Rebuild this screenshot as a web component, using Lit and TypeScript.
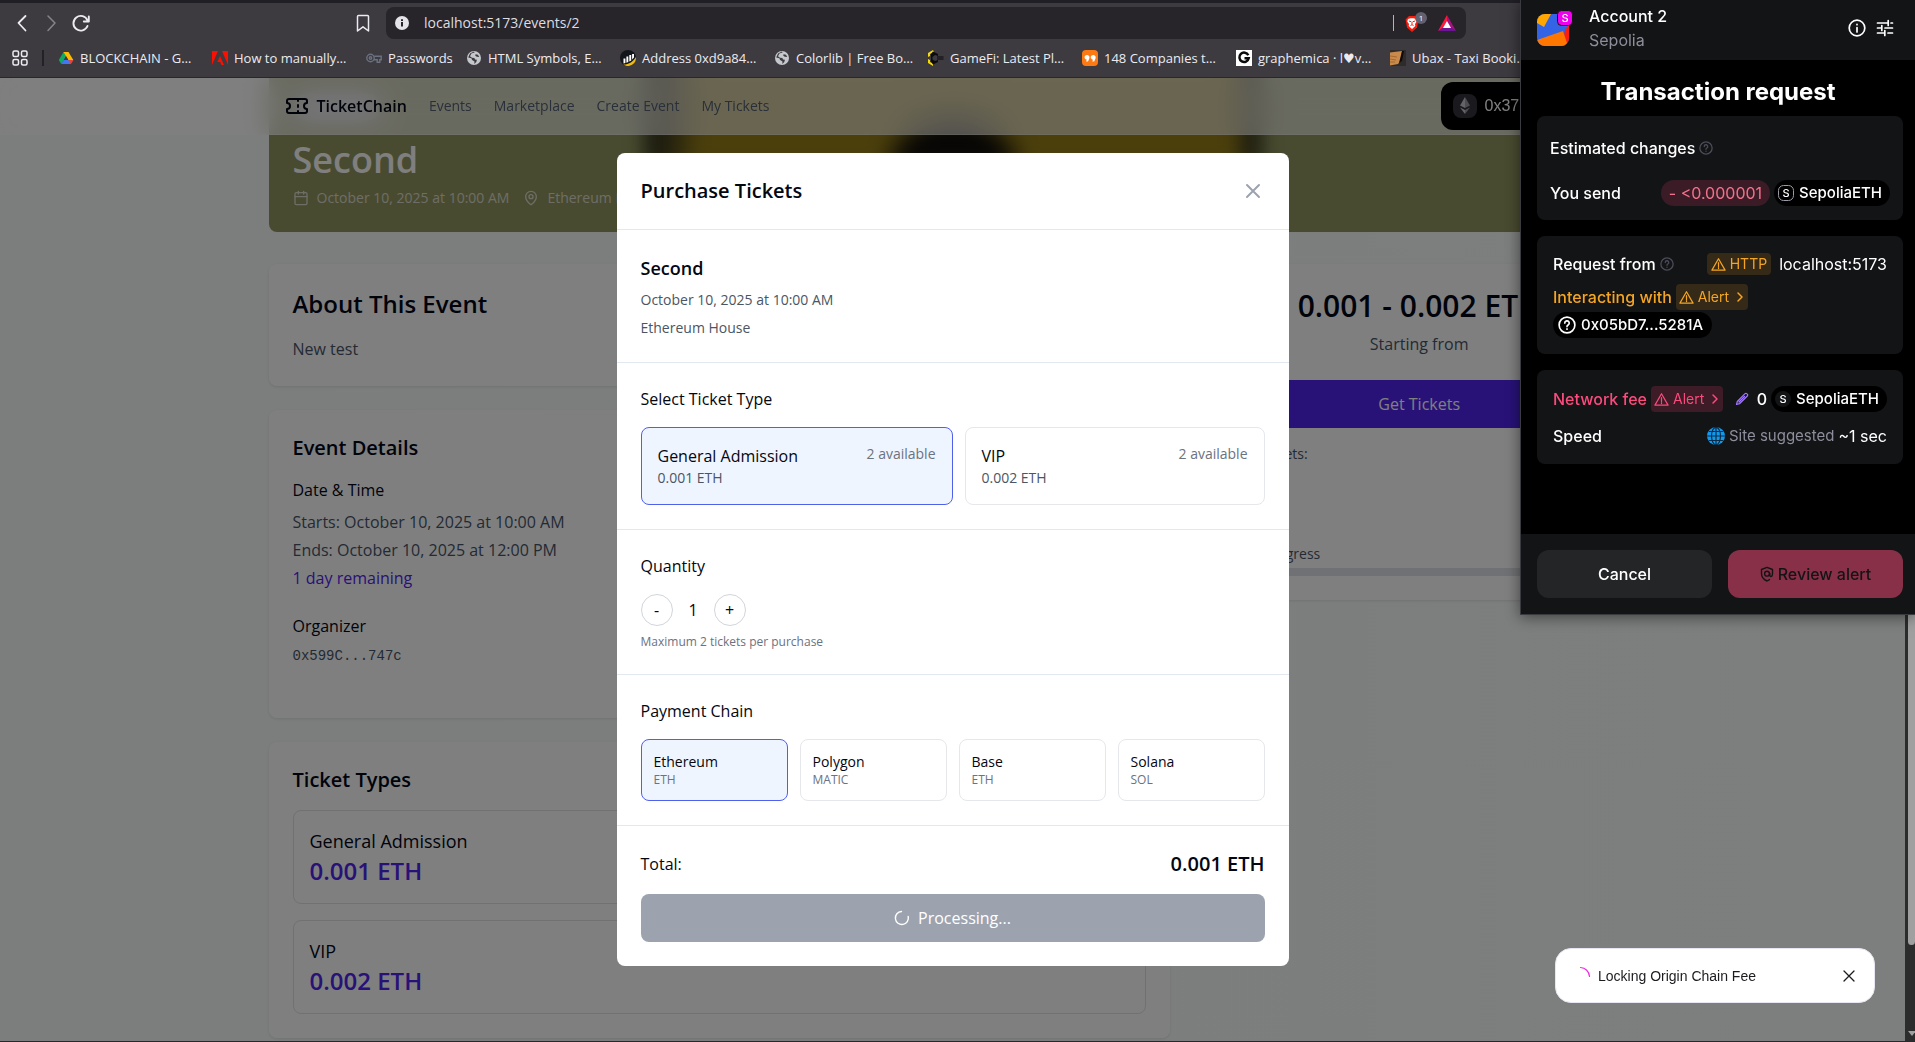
import { LitElement, html, css, svg } from "lit";
import { customElement, property, state } from "lit/decorators.js";
import { classMap } from "lit/directives/class-map.js";

const base = css`
  * {
    box-sizing: border-box;
    margin: 0;
    padding: 0;
  }
  button,
  input {
    font: inherit;
    color: inherit;
    background: none;
    border: 0;
  }
  button {
    cursor: pointer;
  }
  a {
    color: inherit;
    text-decoration: none;
  }
  svg {
    display: block;
    flex: none;
  }
  .stroke {
    fill: none;
    stroke: currentColor;
    stroke-linecap: round;
    stroke-linejoin: round;
  }
`;

/* ---------- Browser toolbar ---------- */

const globe = svg`<circle cx="8" cy="8" r="7" fill="#c4c7cc"/>
  <path d="M8.600 2.400 5.400 3.600 4 6.200l2 1.600 2.400.3.600 1.300 1.900.4-.6 2.300-2 2 .2-2.600-2.400-1.600L5.400 8.300 2.200 7.600 4 3.600 8 1.600Z" fill="#3d3a40"/>
  <path d="M9.500 4.200 12 4.800l1.200 2.200-2.400-.2-1.500-1Z" fill="#3d3a40"/>`;

const bookmarks = [
  {
    label: "BLOCKCHAIN - G…",
    icon: svg`<path d="M5.500 2h5l-4.700 8.300L3.200 14 .8 10Z" fill="#11a861"/><path d="M5.500 2h5L15.300 10h-4.900Z" fill="#ffba00"/><path d="M5.600 10h9.700l-2.500 4H3.200Z" fill="#4177f0"/><path d="M10.400 10h4.900l-2.500 4Z" fill="#ea4335"/><path d="M8 6.300 10.200 10H5.800Z" fill="#3d3a40"/>`,
  },
  {
    label: "How to manually…",
    icon: svg`<path d="M0 1h6L0 15ZM16 1h-6l6 14ZM8 6l4 9H9.300L8.200 12H5.300Z" fill="#fa0f00"/>`,
  },
  {
    label: "Passwords",
    short: true,
    icon: svg`<g fill="none" stroke="#6a7180" stroke-width="1.400"><circle cx="4.500" cy="8" r="3.700"/><circle cx="4.500" cy="8" r="1.200"/><path d="M8.200 6.300h7v3.500h-1.400v2.400h-2.600V9.800H8"/></g>`,
  },
  { label: "HTML Symbols, E…", icon: globe },
  {
    label: "Address 0xd9a84…",
    icon: svg`<circle cx="8" cy="8" r="8" fill="#12161c"/><path d="M15.900 7A8 8 0 0 1 3.500 14.600C9 14.500 13.500 11.500 15.900 7Z" fill="#f0b90b"/><path d="M3.500 8.500h1.900V13l-1.900.6ZM6.400 6.500h1.900V12l-1.900.8ZM9.300 5h1.900v5.500l-1.900 1.100ZM12.100 4H14v3.500l-1.900 2Z" fill="#fff"/>`,
  },
  { label: "Colorlib | Free Bo…", icon: globe },
  {
    label: "GameFi: Latest Pl…",
    icon: svg`<path d="M5 0 0 3v4l2-1V4l4-2ZM0 9v4l5 3V13.500L2 12v-2Z" fill="#f5d90a"/><path d="M5 1.500 10 4v2L7 5 4.500 7v2.500L7 11l3-1v2l-5 2.500-2-3V4Z" fill="#0c0c0d"/><path d="M9 6h6.500v4H9Z" fill="#232126"/>`,
  },
  {
    label: "148 Companies t…",
    icon: svg`<rect width="16" height="16" rx="4" fill="#fb7a14"/><path d="M2.500 7.500a2.500 2.500 0 1 1 4.800 1L6 11.500H4l.8-1.800a2.500 2.500 0 0 1-2.300-2.200ZM8.700 7.500a2.500 2.500 0 1 1 4.800 1l-1.300 3h-2l.8-1.800a2.500 2.500 0 0 1-2.300-2.200Z" fill="#fff"/>`,
  },
  {
    label: "graphemica · l♥v…",
    icon: svg`<rect width="16" height="16" fill="#fff"/><path d="M12.300 5.200A4.700 4.700 0 1 0 12.700 8.300H8.500" fill="none" stroke="#0b0b0b" stroke-width="2.500"/>`,
  },
  {
    label: "Ubax - Taxi Booki…",
    icon: svg`<rect width="16" height="16" fill="#2e2b2b"/><path d="M0 2.500 12 1l-1 9-3 4-8 1.500Z" fill="#c98a4b"/><path d="M0 6l7 1M0 9l6 1M0 12l5 0" stroke="#a66a30"/><path d="M12 1h2l-2 10-3 2Z" fill="#0e0b0a"/>`,
  },
];

@customElement("browser-bar")
class BrowserBar extends LitElement {
  static styles = [
    base,
    css`
      :host {
        display: block;
        flex: none;
        background: #3d3a40;
        border-top: 3px solid #211f26;
        border-bottom: 1px solid #29272d;
        color: #ececf0;
        font: 14px/20px "Open Sans", "DejaVu Sans", sans-serif;
      }
      .tools {
        display: flex;
        align-items: center;
        height: 40px;
        padding: 0 12px;
      }
      .tool {
        display: grid;
        place-items: center;
        width: 20px;
        height: 20px;
        margin-right: 9px;
      }
      .tool.off {
        color: #86838a;
      }
      .save {
        margin-left: 254px;
        margin-right: 13px;
      }
      .address {
        display: flex;
        align-items: center;
        flex: 0 1 1080px;
        height: 32px;
        padding: 0 10px 0 9px;
        gap: 10px;
        border-radius: 8px;
        background: #27242a;
      }
      .address input {
        flex: 1;
        min-width: 0;
        margin-left: 5px;
        outline: 0;
        color: #dddde2;
      }
      .split {
        width: 1px;
        height: 16px;
        background: #b5b3b8;
      }
      .marks {
        display: flex;
        align-items: center;
        gap: 16px;
        height: 34px;
        padding: 0 12px 4px;
        overflow: hidden;
      }
      .apps {
        flex: none;
      }
      .rule {
        flex: none;
        width: 2px;
        height: 16px;
        margin: 0 -2px;
        background: #232126;
      }
      .mark {
        display: flex;
        align-items: center;
        gap: 6px;
        flex: 0 0 138px;
        min-width: 0;
        font-size: 13px;
        white-space: nowrap;
      }
      .mark.short {
        flex-basis: 84px;
      }
    `,
  ];

  render() {
    return html`
      <div class="tools">
        <button class="tool" aria-label="Back">
          <svg class="stroke" width="20" height="20" viewBox="0 0 20 20" stroke-width="1.800"><path d="M13.500 3 6.500 10l7 7.500" /></svg>
        </button>
        <button class="tool off" aria-label="Forward">
          <svg class="stroke" width="20" height="20" viewBox="0 0 20 20" stroke-width="1.500"><path d="m7 3 7 7-7 7.500" /></svg>
        </button>
        <button class="tool" aria-label="Reload">
          <svg class="stroke" width="20" height="20" viewBox="0 0 20 20" stroke-width="1.900"><path d="M17.500 13A7.300 7.300 0 1 1 17.500 7.500M18.800 3.500v5h-5" /></svg>
        </button>
        <button class="tool save" aria-label="Bookmark this page">
          <svg class="stroke" width="20" height="20" viewBox="0 0 20 20" stroke-width="1.500"><path d="M4.500 3.500a1 1 0 0 1 1-1h9a1 1 0 0 1 1 1V18L10 13.800 4.500 18Z" /></svg>
        </button>
        <div class="address">
          <svg width="14" height="14" viewBox="0 0 14 14"><circle cx="7" cy="7" r="7" fill="#e4e4e8" /><path d="M6 6h2v4.500H6ZM6 3.200h2V5H6Z" fill="#27242a" /></svg>
          <input type="text" aria-label="Address" value="localhost:5173/events/2" />
          <span class="split"></span>
          <button aria-label="Shields">
            <svg width="24" height="22" viewBox="0 0 24 22">
              <path d="m3 6 2-2h6l2 2 1.500 1.500-1.500 8-5 4.500-5-4.500L1.500 7.500Z" fill="#fb1c0c" />
              <path d="m4 7 2.500-.7h3L12 7l.8 2.500L11 12l.3 2L8 17l-3.300-3 .3-2-1.800-2.500Z" fill="#fff" />
              <path d="m5 9 2 .7M11 9l-2 .7M8 9.500v3M6.500 13.500 8 12.700l1.500.8" stroke="#fb1c0c" fill="none" />
              <circle cx="17" cy="6" r="6" fill="#62606f" />
              <text x="17" y="9" font-size="8" fill="#fff" text-anchor="middle">1</text>
            </svg>
          </button>
          <button aria-label="Rewards">
            <svg width="18" height="16" viewBox="0 0 18 16"><path d="M9 0 0 16l9-5Z" fill="#ff1a3c" /><path d="m9 0 9 16-9-5Z" fill="#a3127f" /><path d="M0 16h18l-5-3.500H5Z" fill="#6b1595" /><path d="m9 6 4 7H5Z" fill="#fff" /></svg>
          </button>
        </div>
      </div>
      <nav class="marks" aria-label="Bookmarks">
        <button class="apps" aria-label="All apps">
          <svg class="stroke" width="16" height="16" viewBox="0 0 16 16" stroke-width="1.500">
            <rect x="1" y="1" width="5.500" height="5.500" rx="1.500" /><rect x="9.500" y="1" width="5.500" height="5.500" rx="1.500" />
            <rect x="1" y="9.500" width="5.500" height="5.500" rx="1.500" /><rect x="9.500" y="9.500" width="5.500" height="5.500" rx="1.500" />
          </svg>
        </button>
        <span class="rule"></span>
        ${bookmarks.map(
          (b) => html`<a class=${classMap({ mark: true, short: !!b.short })} href="#">
            <svg width="16" height="16" viewBox="0 0 16 16">${b.icon}</svg>${b.label}
          </a>`
        )}
      </nav>
    `;
  }
}

/* ---------- Event page ---------- */

@customElement("site-nav")
class SiteNav extends LitElement {
  static styles = [
    base,
    css`
      :host {
        display: block;
        align-self: start;
        background: rgba(255, 255, 255, 0.6);
        border-bottom: 1px solid rgba(255, 255, 255, 0.25);
        backdrop-filter: blur(12px);
        font: 14px/20px "Open Sans", sans-serif;
        color: #536074;
      }
      .inner {
        display: flex;
        align-items: center;
        gap: 22px;
        max-width: 1368px;
        height: 56px;
        margin: 0 auto;
        padding: 0 16px;
      }
      .brand {
        display: flex;
        align-items: center;
        gap: 8px;
        color: #020617;
        font-size: 16px;
        font-weight: 600;
      }
      .account {
        display: flex;
        align-items: center;
        gap: 8px;
        width: 180px;
        height: 48px;
        margin-left: auto;
        padding: 0 12px;
        border-radius: 12px;
        background: #000;
        color: #fff;
        font: 16px/24px "Liberation Sans", sans-serif;
      }
      .coin {
        display: grid;
        place-items: center;
        width: 24px;
        height: 24px;
        border-radius: 8px;
        background: #32333c;
      }
    `,
  ];

  render() {
    return html`<nav class="inner" aria-label="Main">
      <a class="brand" href="#">
        <svg class="stroke" width="24" height="24" viewBox="0 0 24 24" stroke-width="2">
          <path d="M2 9a3 3 0 0 1 0 6v2a2 2 0 0 0 2 2h16a2 2 0 0 0 2-2v-2a3 3 0 0 1 0-6V7a2 2 0 0 0-2-2H4a2 2 0 0 0-2 2ZM13 5v2M13 17v2M13 11v2" />
        </svg>
        TicketChain
      </a>
      <a href="#">Events</a>
      <a href="#">Marketplace</a>
      <a href="#">Create Event</a>
      <a href="#">My Tickets</a>
      <button class="account">
        <span class="coin">
          <svg width="12" height="18" viewBox="0 0 12 18"><path d="M6 0 1 8.500 6 11Z" fill="#c8c9cf" /><path d="m6 0 5 8.500L6 11Z" fill="#9a9ba3" /><path d="M1 10.500 6 17v-4Z" fill="#c8c9cf" /><path d="M11 10.500 6 17v-4Z" fill="#9a9ba3" /></svg>
        </span>
        0x37c…
      </button>
    </nav>`;
  }
}

@customElement("event-page")
class EventPage extends LitElement {
  static styles = [
    base,
    css`
      :host {
        display: block;
        min-height: 0;
        isolation: isolate;
        background: linear-gradient(90deg, #f8fcfa, #fafefc);
        color: #020617;
        font: 16px/24px "Open Sans", sans-serif;
      }
      .wrap {
        max-width: 1368px;
        margin: 0 auto;
      }
      .banner {
        display: grid;
        height: 154px;
        overflow: hidden;
        border-radius: 0 0 8px 8px;
        background: #929660;
        color: #fff;
      }
      .photo,
      .lead {
        grid-area: 1 / 1;
      }
      .photo {
        justify-self: center;
        width: 620px;
        height: 100px;
        margin-top: -12px;
        filter: blur(9px);
        background:
          radial-gradient(ellipse 78px 66px at 310px 106px, #0e0c0a 65%, #967e1800 100%),
          linear-gradient(90deg, #46472a 0, #34341f 16px, #564c1c 32px, #967e18 56px, #967e18 590px, #34341f 606px, #46472a 100%);
      }
      .lead {
        display: flex;
        flex-direction: column;
        align-items: flex-start;
        gap: 8px;
        align-self: end;
        padding: 0 24px 24px;
        z-index: 1;
      }
      .tag {
        width: 88px;
        height: 26px;
        margin-bottom: 12px;
        border-radius: 13px;
        background: #dcd4f4;
      }
      .title {
        font-size: 36px;
        line-height: 40px;
        font-weight: 600;
      }
      .meta {
        display: flex;
        align-items: center;
        gap: 8px;
        color: #dcdccc;
        font-size: 14px;
        line-height: 20px;
      }
      .meta svg + span {
        margin-right: 6px;
      }
      .columns {
        display: grid;
        grid-template-columns: repeat(3, 1fr);
        gap: 32px;
        align-items: start;
        margin-top: 32px;
      }
      .stack {
        display: grid;
        gap: 24px;
        grid-column: span 2;
      }
      .card {
        padding: 24px;
        border-radius: 8px;
        background: #fff;
        box-shadow: 0 1px 3px rgba(0, 0, 0, 0.1);
      }
      .card.roomy {
        padding-bottom: 52px;
      }
      h2 {
        margin-bottom: 16px;
        font-size: 24px;
        line-height: 32px;
        font-weight: 600;
      }
      h3 {
        margin-bottom: 16px;
        font-size: 20px;
        line-height: 28px;
        font-weight: 600;
      }
      h4 {
        margin-bottom: 8px;
        font-size: 16px;
        font-weight: 500;
      }
      .copy {
        line-height: 26px;
        color: #475569;
      }
      .when {
        display: grid;
        gap: 4px;
        margin-bottom: 24px;
        color: #475569;
      }
      .left {
        color: #5024f0;
        font-weight: 500;
      }
      .mono {
        font: 14px/20px "Liberation Mono", monospace;
        color: #475569;
      }
      .tier {
        padding: 16px;
        border: 1px solid #e2e2e4;
        border-radius: 8px;
      }
      .tier + .tier {
        margin-top: 16px;
      }
      .name {
        font-size: 18px;
        line-height: 28px;
        font-weight: 500;
      }
      .cost {
        color: #5024f0;
        font-size: 24px;
        line-height: 32px;
        font-weight: 600;
      }
      .side {
        text-align: center;
      }
      .range {
        margin-bottom: 8px;
        font-size: 30px;
        line-height: 36px;
        font-weight: 600;
        white-space: nowrap;
      }
      .from {
        color: #475569;
      }
      .get {
        width: 100%;
        height: 48px;
        margin: 24px 0 16px;
        border-radius: 8px;
        background: #5024f0;
        color: #fff;
      }
      .fact {
        text-align: left;
        font-size: 14px;
        line-height: 20px;
        color: #475569;
      }
      .fact.sales {
        margin: 80px 0 4px;
      }
      .bar {
        height: 8px;
        border-radius: 4px;
        background: #dfe3e8;
      }
    `,
  ];

  render() {
    return html`
      <div class="wrap">
        <header class="banner">
          <div class="photo"></div>
          <div class="lead">
            <span class="tag"></span>
            <h1 class="title">Second</h1>
            <p class="meta">
              <svg class="stroke" width="16" height="16" viewBox="0 0 24 24" stroke-width="2"><path d="M8 2v4M16 2v4M3 10h18" /><rect x="3" y="4" width="18" height="18" rx="2" /></svg>
              <span>October 10, 2025 at 10:00 AM</span>
              <svg class="stroke" width="16" height="16" viewBox="0 0 24 24" stroke-width="2"><path d="M20 10c0 5-5.500 10.200-7.400 11.800a1 1 0 0 1-1.200 0C9.500 20.200 4 15 4 10a8 8 0 0 1 16 0" /><circle cx="12" cy="10" r="3" /></svg>
              <span>Ethereum House</span>
            </p>
          </div>
        </header>
        <div class="columns">
          <div class="stack">
            <section class="card">
              <h2>About This Event</h2>
              <p class="copy">New test</p>
            </section>
            <section class="card roomy">
              <h3>Event Details</h3>
              <h4>Date &amp; Time</h4>
              <div class="when">
                <p>Starts: October 10, 2025 at 10:00 AM</p>
                <p>Ends: October 10, 2025 at 12:00 PM</p>
                <p class="left">1 day remaining</p>
              </div>
              <h4>Organizer</h4>
              <p class="mono">0x599C...747c</p>
            </section>
            <section class="card">
              <h3>Ticket Types</h3>
              <div class="tier">
                <p class="name">General Admission</p>
                <p class="cost">0.001 ETH</p>
              </div>
              <div class="tier">
                <p class="name">VIP</p>
                <p class="cost">0.002 ETH</p>
              </div>
            </section>
          </div>
          <section class="card side">
            <p class="range">0.001 - 0.002 ETH</p>
            <p class="from">Starting from</p>
            <button class="get">Get Tickets</button>
            <p class="fact">Total tickets:</p>
            <p class="fact sales">Sales progress</p>
            <div class="bar"></div>
          </section>
        </div>
      </div>
    `;
  }
}

/* ---------- Purchase dialog ---------- */

@customElement("purchase-dialog")
class PurchaseDialog extends LitElement {
  @state() private tier = 0;
  @state() private chain = 0;
  @state() private count = 1;

  private tiers = [
    { name: "General Admission", price: "0.001 ETH" },
    { name: "VIP", price: "0.002 ETH" },
  ];
  private chains = [
    ["Ethereum", "ETH"],
    ["Polygon", "MATIC"],
    ["Base", "ETH"],
    ["Solana", "SOL"],
  ];

  static styles = [
    base,
    css`
      :host {
        display: block;
        width: min(672px, 100%);
        border-radius: 8px;
        background: #fff;
        color: #030712;
        font: 16px/24px "Open Sans", sans-serif;
      }
      section,
      header,
      footer {
        padding: 24px;
      }
      section,
      header {
        border-bottom: 1px solid #e2e8f0;
      }
      header {
        display: flex;
        justify-content: space-between;
        align-items: center;
      }
      h2 {
        font-size: 20px;
        line-height: 28px;
        font-weight: 600;
      }
      .close {
        color: #9ca3af;
      }
      h3 {
        font-size: 18px;
        line-height: 28px;
        font-weight: 600;
      }
      h4 {
        margin-bottom: 16px;
        font-size: 16px;
        font-weight: 500;
      }
      .line,
      .price,
      .stock {
        color: #4b5563;
        font-size: 14px;
        line-height: 20px;
      }
      .line {
        margin-top: 8px;
      }
      .tiers {
        display: grid;
        grid-template-columns: 26fr 25fr;
        gap: 12px;
      }
      .chains {
        display: grid;
        grid-template-columns: repeat(4, 1fr);
        gap: 12px;
      }
      .option {
        display: flex;
        justify-content: space-between;
        align-items: flex-start;
        padding: 16px;
        border: 1px solid #e5e7eb;
        border-radius: 8px;
        text-align: left;
      }
      .option.on {
        border-color: #4f5fee;
        background: #eff5ff;
      }
      .name {
        display: block;
        font-weight: 500;
      }
      .price {
        display: block;
      }
      .stock {
        color: #6b7280;
      }
      .chains .option {
        display: block;
        padding: 12px;
      }
      .chains .name {
        font-size: 14px;
        line-height: 20px;
      }
      .unit {
        display: block;
        color: #6b7280;
        font-size: 12px;
        line-height: 16px;
      }
      .stepper {
        display: flex;
        align-items: center;
        gap: 16px;
      }
      .round {
        width: 32px;
        height: 32px;
        border: 1px solid #d1d5db;
        border-radius: 50%;
        font-weight: 500;
      }
      .count {
        font-weight: 500;
      }
      .hint {
        margin-top: 8px;
        color: #6b7280;
        font-size: 12px;
        line-height: 16px;
      }
      .total {
        display: flex;
        justify-content: space-between;
        align-items: center;
        height: 28px;
        margin-bottom: 16px;
        font-weight: 500;
      }
      .sum {
        font-size: 20px;
        font-weight: 600;
      }
      .submit {
        display: flex;
        align-items: center;
        justify-content: center;
        gap: 8px;
        width: 100%;
        height: 48px;
        border-radius: 8px;
        background: #9ca3af;
        color: #fff;
        font-weight: 500;
      }
    `,
  ];

  private step(by: number) {
    this.count = Math.min(2, Math.max(1, this.count + by));
  }

  render() {
    return html`
      <header>
        <h2>Purchase Tickets</h2>
        <button class="close" aria-label="Close">
          <svg class="stroke" width="24" height="24" viewBox="0 0 24 24" stroke-width="2"><path d="M18 6 6 18M6 6l12 12" /></svg>
        </button>
      </header>
      <section>
        <h3>Second</h3>
        <p class="line">October 10, 2025 at 10:00 AM</p>
        <p class="line">Ethereum House</p>
      </section>
      <section>
        <h4>Select Ticket Type</h4>
        <div class="tiers">
          ${this.tiers.map(
            (t, i) => html`<button class=${classMap({ option: true, on: i === this.tier })} aria-pressed=${i === this.tier} @click=${() => (this.tier = i)}>
              <span><span class="name">${t.name}</span><span class="price">${t.price}</span></span>
              <span class="stock">2 available</span>
            </button>`
          )}
        </div>
      </section>
      <section>
        <h4>Quantity</h4>
        <div class="stepper">
          <button class="round" aria-label="Fewer" @click=${() => this.step(-1)}>-</button>
          <span class="count">${this.count}</span>
          <button class="round" aria-label="More" @click=${() => this.step(1)}>+</button>
        </div>
        <p class="hint">Maximum 2 tickets per purchase</p>
      </section>
      <section>
        <h4>Payment Chain</h4>
        <div class="chains">
          ${this.chains.map(
            ([name, unit], i) => html`<button class=${classMap({ option: true, on: i === this.chain })} aria-pressed=${i === this.chain} @click=${() => (this.chain = i)}>
              <span class="name">${name}</span><span class="unit">${unit}</span>
            </button>`
          )}
        </div>
      </section>
      <footer>
        <div class="total"><span>Total:</span><span class="sum">0.001 ETH</span></div>
        <button class="submit">
          <svg class="stroke" width="16" height="16" viewBox="0 0 16 16" stroke-width="1.400"><path d="M14.200 6.500A6.500 6.500 0 1 1 7.500 1.500" /></svg>
          Processing...
        </button>
      </footer>
    `;
  }
}

/* ---------- Wallet popup ---------- */

const warning = svg`<path d="M8 1.800 15 14H1Z" stroke-width="1.300"/><path d="M8 6v4M8 11.300v1" stroke-width="1.300"/>`;

@customElement("help-icon")
class HelpIcon extends LitElement {
  @property({ type: Number }) size = 14;
  static styles = [
    base,
    css`
      :host {
        display: inline-flex;
        color: #4b4c57;
      }
      :host([bright]) {
        color: #fff;
      }
    `,
  ];
  render() {
    return html`<svg class="stroke" width=${this.size} height=${this.size} viewBox="0 0 16 16" stroke-width="1.500">
      <circle cx="8" cy="8" r="7" /><path d="M6 6.300a2 2 0 1 1 3 1.700c-.7.400-1 .7-1 1.400M8 11.500v.2" />
    </svg>`;
  }
}

@customElement("wallet-popup")
class WalletPopup extends LitElement {
  static styles = [
    base,
    css`
      :host {
        display: block;
        background: #000;
        border-left: 1px solid #3a3b3e;
        border-bottom: 1px solid #3a3b3e;
        box-shadow: 0 2px 14px rgba(0, 0, 0, 0.5);
        color: #fff;
        font: 500 16px/24px Inter, sans-serif;
      }
      header {
        display: flex;
        align-items: center;
        height: 60px;
        padding: 0 20px 4px 16px;
        background: #131416;
      }
      .who {
        display: flex;
        flex-direction: column;
        flex: 1;
        margin-left: 16px;
      }
      .net,
      .grey {
        color: #8d8e9b;
        font-weight: 400;
      }
      .grey {
        font-size: 15px;
      }
      .tool + .tool {
        margin-left: 8px;
      }
      h2 {
        padding: 16px 0 8px;
        font-size: 24px;
        line-height: 32px;
        font-weight: 700;
        text-align: center;
      }
      .body {
        display: grid;
        gap: 16px;
        padding: 0 12px 70px 16px;
      }
      .card {
        padding: 16px;
        border-radius: 8px;
        background: #131416;
      }
      .card.first {
        padding: 20px 13px 14px;
      }
      .row {
        display: flex;
        align-items: center;
        gap: 4px;
        min-height: 24px;
        white-space: nowrap;
      }
      .row.gap {
        margin-top: 20px;
      }
      .row.with {
        margin: 8px 0 2px;
      }
      .row.speed {
        margin-top: 12px;
      }
      .push {
        margin-left: auto;
      }
      .plain {
        font-weight: 400;
      }
      .pill {
        display: inline-flex;
        align-items: center;
        gap: 5px;
        height: 26px;
        padding: 0 8px 0 4px;
        border-radius: 13px;
        background: #000;
        font-size: 15px;
      }
      .pill.loss {
        padding: 0 8px;
        background: #3b1c26;
        color: #f0728c;
        font-size: 16px;
        font-weight: 400;
      }
      .pill.target {
        padding: 0 9px 0 5px;
      }
      .badge {
        display: inline-flex;
        align-items: center;
        gap: 4px;
        height: 26px;
        padding: 0 3px;
        border-radius: 4px;
        font-size: 14px;
        font-weight: 400;
      }
      .badge.small {
        height: 22px;
        padding: 0 4px;
        margin-right: 4px;
      }
      .amber {
        color: #f5a524;
      }
      .badge.amber {
        background: #352a18;
      }
      .rose {
        color: #fb4a7c;
      }
      .badge.rose {
        background: #3d1b27;
      }
      .fee {
        margin-left: 4px;
      }
      footer {
        display: grid;
        grid-template-columns: 1fr 1fr;
        gap: 16px;
        padding: 16px 12px 16px 16px;
        background: #131416;
      }
      .action {
        display: flex;
        align-items: center;
        justify-content: center;
        gap: 4px;
        height: 48px;
        border-radius: 12px;
        background: #242527;
      }
      .action.review {
        background: #893049;
        color: #131416;
      }
    `,
  ];

  private chip(bare = false) {
    return html`<svg width="16" height="16" viewBox="0 0 16 16">
      ${bare
        ? svg`<circle cx="8" cy="8" r="8" fill="#131416"/>`
        : svg`<rect x=".5" y=".5" width="15" height="15" rx="5" fill="none" stroke="#9a9ba6"/>`}
      <text x="8" y="12" font-size="11" fill="#fff" text-anchor="middle">S</text>
    </svg>`;
  }

  private alert(kind: string) {
    return html`<button class="badge ${kind}">
      <svg class="stroke" width="15" height="15" viewBox="0 0 16 16">${warning}</svg>Alert
      <svg class="stroke" width="12" height="12" viewBox="0 0 12 12" stroke-width="1.500"><path d="m5 2 4 4-4 4" /></svg>
    </button>`;
  }

  render() {
    return html`
      <header>
        <svg width="36" height="40" viewBox="0 0 36 40">
          <defs><clipPath id="tile"><rect y="6" width="32" height="32" rx="8" /></clipPath></defs>
          <g clip-path="url(#tile)">
            <rect y="6" width="32" height="32" fill="#3464e6" />
            <path d="M0 6h14L7 19 0 15Z" fill="#ffa600" />
            <path d="M28 22 32 17v21H25Z" fill="#fb1d0d" />
            <path d="M0 32 26 23l4 12-4 5H0Z" fill="#ff7700" />
          </g>
          <rect x="20.500" y="2.500" width="15" height="15" rx="4" fill="#f000ee" stroke="#131416" />
          <text x="28" y="14" font-size="11" fill="#fff" text-anchor="middle">S</text>
        </svg>
        <div class="who"><span>Account 2</span><span class="net">Sepolia</span></div>
        <button class="tool" aria-label="Details">
          <svg class="stroke" width="20" height="20" viewBox="0 0 20 20" stroke-width="1.700"><circle cx="10" cy="10" r="7.800" /><path d="M10 9.500V14M10 6.300v.4" /></svg>
        </button>
        <button class="tool" aria-label="Settings">
          <svg class="stroke" width="20" height="20" viewBox="0 0 20 20" stroke-width="1.700"><path d="M2.500 5h10M16 5h1.500M13.200 2.500v5M2.500 10h4M10 10h7.500M6.800 7.500v5M2.500 15h6M13 15h4.500M9.800 12.500v5" /></svg>
        </button>
      </header>
      <h2>Transaction request</h2>
      <div class="body">
        <section class="card first">
          <div class="row">Estimated changes <help-icon></help-icon></div>
          <div class="row gap">
            You send
            <span class="pill loss push">- &lt;0.000001</span>
            <span class="pill">${this.chip()}SepoliaETH</span>
          </div>
        </section>
        <section class="card">
          <div class="row">
            Request from <help-icon></help-icon>
            <span class="badge small amber push"><svg class="stroke" width="15" height="15" viewBox="0 0 16 16">${warning}</svg>HTTP</span>
            <span class="plain">localhost:5173</span>
          </div>
          <div class="row with amber">Interacting with ${this.alert("amber")}</div>
          <div class="row">
            <span class="pill target"><help-icon bright size="18"></help-icon>0x05bD7...5281A</span>
          </div>
        </section>
        <section class="card">
          <div class="row">
            <span class="rose">Network fee</span> ${this.alert("rose")}
            <button class="push" aria-label="Edit fee">
              <svg class="stroke" width="14" height="14" viewBox="0 0 14 14" stroke-width="1.200" color="#a277ff"><path d="M1.500 12.500 2.300 9.500 10 1.700a1.200 1.200 0 0 1 1.800 0l.5.500a1.200 1.200 0 0 1 0 1.800L4.500 11.700ZM4 10l5.500-5.500" /></svg>
            </button>
            <span class="fee">0</span>
            <span class="pill">${this.chip(true)}SepoliaETH</span>
          </div>
          <div class="row speed">
            Speed
            <svg class="push" width="18" height="18" viewBox="0 0 18 18"><circle cx="9" cy="9" r="9" fill="#0f9af0" /><g fill="none" stroke="#0b2b45" stroke-width="1.200"><path d="M9 0v18M0 9h18M2 4.500h14M2 13.500h14" /><ellipse cx="9" cy="9" rx="4.500" ry="8.700" /></g></svg>
            <span class="grey">Site suggested</span> <span class="plain">~1 sec</span>
          </div>
        </section>
      </div>
      <footer>
        <button class="action">Cancel</button>
        <button class="action review">
          <svg class="stroke" width="14" height="16" viewBox="0 0 14 16" stroke-width="1.400"><path d="M9.500 13.600 7 15C3.500 13.500 1.500 11 1.500 7.500v-4L7 1.300l5.500 2.200v4c0 1.200-.3 2-.7 2.700-.9.700-2 .2-2-1V7.500" /><circle cx="7" cy="7.700" r="2.400" /></svg>
          Review alert
        </button>
      </footer>
    `;
  }
}

/* ---------- Toast ---------- */

@customElement("fee-toast")
class FeeToast extends LitElement {
  static styles = [
    base,
    css`
      :host {
        display: block;
        width: 320px;
        border: 1px solid #e8e6f0;
        border-radius: 16px;
        background: #fff;
        color: #1c1c20;
        font: 14px/20px "Liberation Sans", sans-serif;
      }
      .inner {
        display: flex;
        align-items: center;
        gap: 7px;
        height: 53px;
        padding: 0 18px 0 20px;
      }
      .text {
        flex: 1;
      }
    `,
  ];
  render() {
    return html`<div class="inner">
      <svg class="stroke" width="15" height="20" viewBox="0 0 15 20" stroke-width="1.200" color="#f02be0"><path d="M4.500 1.500a9.500 9.500 0 0 1 9 9" /></svg>
      <span class="text" role="status">Locking Origin Chain Fee</span>
      <button aria-label="Dismiss">
        <svg class="stroke" width="14" height="14" viewBox="0 0 14 14" stroke-width="1.300"><path d="m2 2 10 10M12 2 2 12" /></svg>
      </button>
    </div>`;
  }
}

/* ---------- Window ---------- */

@customElement("app-root")
class AppRoot extends LitElement {
  static styles = [
    base,
    css`
      :host {
        display: flex;
        flex-direction: column;
        position: relative;
        height: 100vh;
        overflow: hidden;
        border-bottom: 1px solid #29272d;
        box-sizing: border-box;
      }
      .view {
        display: grid;
        grid-template-columns: minmax(0, 1fr) 10px;
        flex: 1;
        min-height: 0;
      }
      .page {
        display: grid;
        grid-template: minmax(0, 1fr) / minmax(0, 1fr);
        overflow: hidden;
      }
      .page > * {
        grid-area: 1 / 1;
      }
      .shade {
        display: grid;
        place-items: center;
        z-index: 1;
        background: rgba(0, 0, 0, 0.5);
      }
      fee-toast {
        place-self: end;
        margin: 0 30px 38px 0;
        z-index: 2;
      }
      .scroll {
        display: flex;
        flex-direction: column;
        align-items: flex-end;
        background: #2c2c2c;
      }
      .thumb {
        width: 7px;
        height: 90%;
        border-radius: 0 0 4px 4px;
        background: #a0a0a0;
      }
      .down {
        margin-top: auto;
        margin-bottom: 4px;
      }
      wallet-popup {
        position: absolute;
        top: 0;
        right: 0;
        width: 395px;
        z-index: 3;
      }
    `,
  ];

  render() {
    return html`
      <browser-bar></browser-bar>
      <div class="view">
        <div class="page">
          <event-page></event-page>
          <site-nav></site-nav>
          <div class="shade"><purchase-dialog role="dialog" aria-label="Purchase Tickets"></purchase-dialog></div>
          <fee-toast></fee-toast>
        </div>
        <div class="scroll">
          <div class="thumb"></div>
          <svg class="down" width="7" height="6" viewBox="0 0 7 6"><path d="M0 0h8L4 5Z" fill="#a0a0a0" /></svg>
        </div>
      </div>
      <wallet-popup></wallet-popup>
    `;
  }
}
